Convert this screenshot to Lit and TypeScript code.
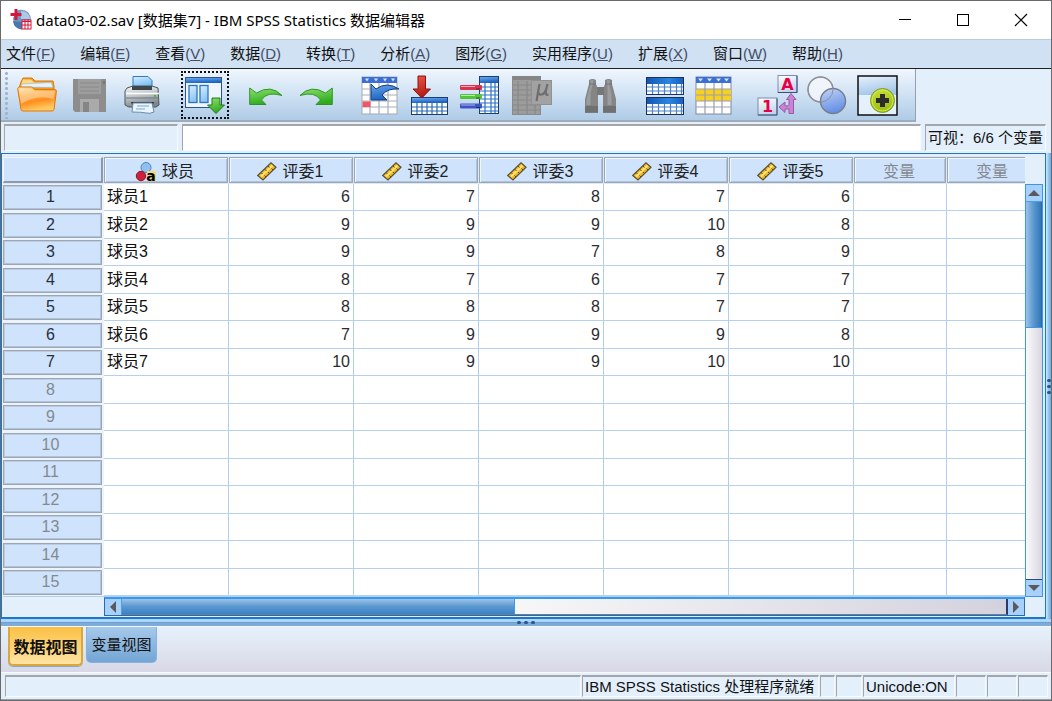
import { LitElement, html, css, svg, nothing } from "lit";
import { customElement } from "lit/decorators.js";
import { classMap } from "lit/directives/class-map.js";

type Menu = { name: string; key: string };
type Tool = { label: string; art: unknown; focused?: boolean; off?: boolean };
type ToolGroup = { kind: string; tools: Tool[] };

const MENUS: Menu[] = [
  { name: "文件", key: "F" },
  { name: "编辑", key: "E" },
  { name: "查看", key: "V" },
  { name: "数据", key: "D" },
  { name: "转换", key: "T" },
  { name: "分析", key: "A" },
  { name: "图形", key: "G" },
  { name: "实用程序", key: "U" },
  { name: "扩展", key: "X" },
  { name: "窗口", key: "W" },
  { name: "帮助", key: "H" },
];

const JUDGES = ["评委1", "评委2", "评委3", "评委4", "评委5"];
const CASES: (string | number)[][] = [
  ["球员1", 6, 7, 8, 7, 6],
  ["球员2", 9, 9, 9, 10, 8],
  ["球员3", 9, 9, 7, 8, 9],
  ["球员4", 8, 7, 6, 7, 7],
  ["球员5", 8, 8, 8, 7, 7],
  ["球员6", 7, 9, 9, 9, 8],
  ["球员7", 10, 9, 9, 10, 10],
];
const ROWS = 15;

/* Horizontal and vertical rules of a small table drawing. */
const rules = (xs: number[], ys: number[], x0: number, x1: number, y0: number, y1: number, color: string) => svg`
  <path fill="none" stroke=${color} stroke-width="1.2"
    d=${xs.map((x) => `M${x} ${y0}V${y1}`).join("") + ys.map((y) => `M${x0} ${y}H${x1}`).join("")}></path>`;

const folder = svg`
  <path d="M5 35 2 13 4 7 6 3h9l3 3h18l1 5v22z" fill="#f39a1c" stroke="#d97a0c"></path>
  <path d="M6 4.500h8l3 3h18l1 4H3.500z" fill="#ffd884"></path>
  <path d="M4 12 5 9l29-1.500 2 5z" fill="#e6f2fd" stroke="#8fb7da" stroke-width=".6"></path>
  <path d="M.7 14q0-2 2-2h12l3 2.500h20q2 0 1.700 2L37 34.500q-.3 1.500-2 1.500H6q-1.500 0-2-1.500z" fill="url(#g-folder)" stroke="#e07a0c"></path>
  <path d="M2 15q.2-1.500 1.500-1.500h11l3 2.500h20.500l-1.500 8Q20 19 4 29z" fill="#fff" opacity=".35"></path>`;

const disk = svg`
  <path d="M4 4h33v33H6l-2-2z" fill="#8d8d8d"></path>
  <path d="M9 4h23v15H9z" fill="#9e9e9e"></path>
  <path d="M11 8h19M11 12h19M11 16h19" stroke="#8a8a8a"></path>
  <path d="M11 24h19v13H11z" fill="#aaa"></path>
  <path d="M14 27h6v10h-6z" fill="#858585"></path>
  <path d="M34 6h2v3h-2z" fill="#777"></path>`;

const printer = svg`
  <path d="M12 1.500h15l4 4V16H12z" fill="url(#g-paper)" stroke="#2b7cc4"></path>
  <path d="M6 13l6-2h19l6 2 1 17-3 2H8l-4-2V16z" fill="url(#g-steel)" stroke="#4f565c"></path>
  <path d="M11 11h20v4H11z" fill="#3f464c"></path>
  <path d="M5 18.500h33" stroke="#fff" stroke-width="1.500"></path>
  <path d="M5 23h33" stroke="#6d757c"></path>
  <circle cx="34" cy="21" r="1.200" fill="#45c42e"></circle>
  <path d="M10 27h23l-1 3H11z" fill="#2f353a"></path>
  <path d="M12 28h19l2 9q-4 2-8 1t-14-1z" fill="#eaf5ff" stroke="#6d8aa4"></path>
  <path d="M16 31h12M15 34h9" stroke="#7aa7cf"></path>`;

const dialogs = svg`
  <rect x="4.500" y="2.500" width="36" height="30" fill="#eef5fd" stroke="#2a5293"></rect>
  <rect x="5" y="3" width="35" height="5" fill="url(#g-blue)"></rect>
  <rect x="8" y="10.500" width="8" height="17" fill="url(#g-window)" stroke="#2b76c2" stroke-width="1.300"></rect>
  <rect x="19" y="10.500" width="8" height="17" fill="url(#g-window)" stroke="#2b76c2" stroke-width="1.300"></rect>
  <path d="M31 23h8v7h4.500L35 38.500 26.500 30H31z" fill="url(#g-green)" stroke="#237a12"></path>`;

const undo = svg`
  <path d="M.700 13v16.500H17L12.500 25Q18 16 33 20.500 22 9 7.500 18z" fill="url(#g-green)" stroke="#25901a" stroke-width=".9"></path>`;
const redo = svg`
  <path d="M33.300 13v16.500H17l4.500-4.500Q16 16 1 20.500 12 9 26.500 18z" fill="url(#g-green)" stroke="#25901a" stroke-width=".9"></path>`;

const goCase = svg`
  <rect x="3" y="2" width="35" height="37" fill="#fff" stroke="#a4a9b5"></rect>
  <rect x="3" y="2" width="35" height="6" fill="#3c6fd4"></rect>
  <path d="M6 3.500h4l-2 3zM15 3.500h4l-2 3zM24 3.500h4l-2 3zM32 3.500h4l-2 3z" fill="#d7e4fb"></path>
  ${rules([11, 20, 29], [14, 20, 26, 32], 3, 38, 8, 39, "#a8adbb")}
  <rect x="3.500" y="26.500" width="8" height="5.500" fill="#f05467"></rect>
  <path d="M12 9v16h16l-5-5q6-7 17-6Q28 6 17 14z" fill="url(#g-blue)" stroke="#173f7c"></path>`;

const goVar = svg`
  <rect x="2.500" y="22.500" width="36" height="17" fill="#fff" stroke="#1a3f73"></rect>
  <rect x="3" y="23" width="35" height="5" fill="url(#g-blue)"></rect>
  ${rules([8, 13, 18, 23, 28, 33], [32, 36], 3, 38, 28, 39, "#2a68b3")}
  <path d="M9 1h7.500v13h5l-8.700 9L4 14h5z" fill="url(#g-red)" stroke="#8b1410"></path>`;

const variables = svg`
  <rect x="20.500" y="1.500" width="19" height="37" fill="#fff" stroke="#1a3f73"></rect>
  <rect x="21" y="2" width="18" height="6" fill="url(#g-blue)"></rect>
  ${rules([26, 32, 36], [12, 16, 20, 24, 28, 32, 36], 21, 39, 8, 38, "#2a72c3")}
  <rect x="1" y="10" width="22" height="5" rx="1" fill="#d93250"></rect>
  <rect x="1" y="19" width="22" height="5" rx="1" fill="#54c43c"></rect>
  <rect x="1" y="28.500" width="22" height="5" rx="1" fill="#3e52c9"></rect>
  <path d="M2 11.500h14M2 20.500h14M2 30h14" stroke="#fff" opacity=".6"></path>
  <path d="M17 14h4M17 23h4M17 32.500h4" stroke="#111" opacity=".6"></path>`;

const descriptives = svg`
  <rect x="3.500" y="1.500" width="28" height="38" fill="#9c9c9c" stroke="#8a8a8a"></rect>
  <rect x="4" y="1" width="28" height="4" fill="#858585"></rect>
  ${rules([9, 18, 26], [10, 15, 20, 25, 30, 35], 4, 31, 6, 39, "#888888")}
  <rect x="22.500" y="5.500" width="20" height="24" fill="#a2a2a2" stroke="#909090"></rect>
  <path d="M30.500 9 27.500 26M29.500 17q0 3 3 2.500t4.500-4.500L38.500 9M37 16q-1 5 2.500 3.500" fill="none" stroke="#6e6e6e" stroke-width="2.200"></path>`;

const binoculars = svg`
  <path d="M4 5q3.500-2 7 0v4l2 5v24H0V24L4 9zM20 5q3.500-2 7 0v4l4 15v14H18V14l2-5z" fill="#858586"></path>
  <path d="M5.500 5h3l-1 5-2 8v12h-4v-6L5.500 10zM22 5h2.500v6l2 8v11h-4V14z" fill="#9b9c9d"></path>
  <path d="M12 12h7v8h-7z" fill="#777"></path>
  <path d="M0 31h13v6.500H0zM18 31h13v6.500H18z" fill="#6f7070"></path>
  <path d="M4 9h7M20 9h7" stroke="#717272"></path>`;

const split = svg`
  ${[2, 22].map(
    (y) => svg`
    <rect x="1.500" y=${y + 0.5} width="37" height="17" fill="#fff" stroke="#1a2f63"></rect>
    <rect x="2" y=${y + 1} width="36" height="6" fill="url(#g-band)"></rect>
    ${rules([7.5, 13.5, 19.5, 25.5, 31.5, 36.5], [y + 10, y + 14], 2, 38, y + 7, y + 17, "#4a82c6")}`,
  )}`;

const select = svg`
  <rect x="1" y="2" width="35" height="37" fill="#fff" stroke="#8088a0"></rect>
  <rect x="1" y="2" width="35" height="6" fill="#3c6fd4"></rect>
  <path d="M3 3.500h5l-2.500 3zM12 3.500h5l-2.500 3zM21 3.500h5l-2.500 3zM29 3.500h5l-2.500 3z" fill="#d7e4fb"></path>
  <rect x="1" y="14" width="35" height="12" fill="#f8d024"></rect>
  ${rules([10, 19, 27], [14, 20, 26, 32], 1, 36, 8, 39, "#9a9fae")}`;

const labels = svg`
  <rect x="23" y=".5" width="19" height="17" fill="url(#g-key)" stroke="#7d8db0"></rect>
  <path d="M42 1v16.500H23" fill="none" stroke="#34507e"></path>
  <text x="32.500" y="14.500" text-anchor="middle" class="key-glyph">A</text>
  <rect x="3" y="23" width="19" height="17" fill="url(#g-key)" stroke="#7d8db0"></rect>
  <path d="M22 23.500V40H3" fill="none" stroke="#34507e"></path>
  <text x="12.500" y="37" text-anchor="middle" class="key-glyph">1</text>
  <path d="M36 18.500l-4.500 6H34v5q0 2-4 1.500v-4L24 32l6 5.500V34h4v4.500h4.500v-14H41z" fill="#c884d0" stroke="#9a58a8"></path>`;

const sets = svg`
  <circle cx="15.500" cy="14.500" r="12.500" fill="#f3f6fc" fill-opacity=".85" stroke="#8d919b" stroke-width="1.500"></circle>
  <circle cx="28" cy="26" r="12.500" fill="url(#g-set)" stroke="#777d8c" stroke-width="1.500"></circle>
  <circle cx="15.500" cy="14.500" r="12.500" fill="none" stroke="#8d919b"></circle>`;

const addOn = svg`
  <rect x="3" y="1" width="39" height="39" fill="#e4f0fc"></rect>
  <path d="M3 1h39v19H3z" fill="url(#g-pane)"></path>
  <rect x="3" y="1" width="39" height="39" fill="none" stroke="#111" stroke-width="1.500"></rect>
  <circle cx="27.500" cy="25.500" r="12" fill="url(#g-lime)" stroke="#7f9c1c"></circle>
  <circle cx="27.500" cy="25.500" r="10.500" fill="none" stroke="#d3ea55"></circle>
  <path d="M25 19h5v4h4v5h-4v4h-5v-4h-4v-5h4z" fill="#2c2c2c"></path>`;

const TOOLS: ToolGroup[] = [
  {
    kind: "loose",
    tools: [
      { label: "打开", art: folder },
      { label: "保存", art: disk, off: true },
      { label: "打印", art: printer },
    ],
  },
  { kind: "", tools: [{ label: "重新调用对话框", art: dialogs, focused: true }] },
  { kind: "", tools: [{ label: "撤消", art: undo }, { label: "重做", art: redo }] },
  {
    kind: "",
    tools: [
      { label: "转到个案", art: goCase },
      { label: "转到变量", art: goVar },
      { label: "变量", art: variables },
      { label: "描述统计", art: descriptives, off: true },
    ],
  },
  { kind: "apart", tools: [{ label: "查找", art: binoculars, off: true }] },
  { kind: "", tools: [{ label: "拆分文件", art: split }, { label: "选择个案", art: select }] },
  {
    kind: "",
    tools: [
      { label: "值标签", art: labels },
      { label: "使用变量集", art: sets },
      { label: "定制工具栏", art: addOn },
    ],
  },
];

const SHARED_FONT = css`"Liberation Sans", "Noto Sans CJK SC", sans-serif`;

@customElement("app-root")
export class AppRoot extends LitElement {
  static styles = css`
    :host {
      display: flex;
      flex-direction: column;
      box-sizing: border-box;
      min-height: 100vh;
      overflow: hidden;
      border: 1px solid #6a6a6c;
      background: #e3effb;
      color: #111;
      font: 15px/20px ${SHARED_FONT};
    }
    * {
      box-sizing: border-box;
    }
    button,
    input {
      margin: 0;
      padding: 0;
      border: 0;
      border-radius: 0;
      background: none;
      color: inherit;
      font: inherit;
    }
    svg {
      display: block;
      flex: none;
      overflow: visible;
    }
    .defs {
      position: absolute;
    }

    .title {
      display: flex;
      align-items: center;
      height: 38px;
      padding: 0 1px 0 9px;
      background: #fff;
      color: #000;
    }
    .title-text {
      flex: 1;
      margin: 0 0 0 3px;
      font: 15px/20px "Noto Sans", "Noto Sans CJK SC", sans-serif;
      white-space: nowrap;
    }
    .window-button {
      display: grid;
      place-items: center;
      width: 58px;
      height: 38px;
    }

    .menu {
      display: flex;
      gap: 25px;
      height: 30px;
      padding: 0 5px;
      border-top: 1px solid #b9cddd;
      border-bottom: 1px solid #1d2126;
      background: #cfe1f3;
      white-space: nowrap;
    }
    .mnemonic {
      color: #444d63;
    }

    .tool-row {
      display: flex;
    }
    .toolbar {
      display: flex;
      align-items: center;
      gap: 20px;
      height: 53px;
      padding-right: 20px;
      border-right: 1px solid #979fa8;
      border-bottom: 2px solid #a2acb8;
      background: linear-gradient(#eff6fd, #d3e4f5 45%, #afcbe6);
    }
    .grip {
      width: 3px;
      height: 48px;
      margin: 0 -11px 0 4px;
      background: radial-gradient(circle, #9fb2c6 1px, transparent 2px) 0 0 / 3px 5px;
    }
    .group {
      display: flex;
      align-items: center;
      gap: 10px;
    }
    .loose {
      gap: 12px;
    }
    .apart {
      margin-left: 16px;
    }
    .tool {
      display: grid;
      place-items: center start;
      width: 40px;
      height: 48px;
    }
    .focused {
      width: 48px;
      outline: 2px dotted #111;
      outline-offset: -2px;
    }
    .key-glyph {
      font: bold 16px "DejaVu Sans", sans-serif;
      fill: #e60046;
    }

    .entry {
      display: flex;
      gap: 4px;
      height: 31px;
      padding: 2px 5px 2px 3px;
    }
    .inset {
      border: 1px solid;
      border-width: 2px 1px 1px;
      border-color: #a3a6ab #f8fbfe #f8fbfe #a4a6aa;
    }
    .cell-name {
      width: 174px;
    }
    .cell-value {
      flex: 1;
      min-width: 0;
      background: #fff;
    }
    .visible {
      padding: 2px 2px 0;
      white-space: nowrap;
    }

    .work {
      display: flex;
      flex: 1;
      background: #e3effb;
    }
    .frame {
      display: grid;
      flex: 1;
      grid-template-columns: minmax(0, 1fr) 18px;
      grid-template-rows: auto 19px;
      align-content: start;
      min-width: 0;
      padding: 2px 2px 1px 1px;
      border: 1px solid #1d76c8;
      border-bottom-width: 2px;
    }
    .side-split {
      display: flex;
      flex-direction: column;
      align-items: center;
      justify-content: center;
      gap: 3px;
      width: 5px;
      background: linear-gradient(90deg, #d3e9ff, #8fc8fc 50%, #72a9dc);
    }
    .base-split {
      display: flex;
      align-items: center;
      justify-content: center;
      gap: 3px;
      height: 7px;
      background: linear-gradient(#a9d7ff 0 3px, #6d9dcc 3px 4px, #7fabd9 4px);
    }
    .dot {
      width: 4px;
      height: 3px;
      border-radius: 2px;
      background: #2b5590;
    }

    .sheet-clip {
      min-width: 0;
      overflow: hidden;
      border-bottom: 1px solid #b4d2ef;
    }
    .sheet {
      width: 100%;
      min-width: 1037px;
      border-spacing: 0;
      table-layout: fixed;
      background: #fff;
      font-size: 16px;
    }
    .col-head {
      width: 101px;
    }
    .col-data {
      width: 125px;
    }
    .col-spare {
      width: 93px;
    }
    th,
    td {
      padding: 0;
      font-weight: normal;
      white-space: nowrap;
    }
    .head-cell {
      height: 28px;
      padding: 1px 1px 1px 0;
      background: #dfe7f0;
    }
    .head-face {
      display: flex;
      align-items: center;
      justify-content: center;
      gap: 6px;
      height: 26px;
      padding: 3px 2px 0 0;
      border: 1px solid #9aa7b9;
      background: #cfe3fc;
      box-shadow: inset 1px 1px 0 #f0f7ff, inset -1px -1px 0 #b4c2d6;
      color: #222;
    }
    .spare {
      color: #85898f;
    }
    .corner {
      border-width: 1px 2px 2px 1px;
      border-color: #eef5fd #8b99ae #8b99ae #eef5fd;
      box-shadow: none;
    }
    .row-head {
      padding: 0 2px 0 0;
      background: #edf3fa;
      text-align: center;
    }
    .row-face {
      display: block;
      height: 25px;
      padding-right: 4px;
      border: 1px solid #9aa7b9;
      background: #cfe3fc;
      box-shadow: inset 1px 1px 0 #bccbe0, inset -1px -1px 0 #b4c2d6;
      line-height: 22px;
      color: #28303c;
    }
    .unused {
      color: #85898f;
    }
    .row {
      height: 27px;
    }
    .row:nth-child(even) {
      height: 28px;
    }
    .cell {
      padding: 0 3px;
      border-right: 1px solid #b0cfee;
      border-bottom: 1px solid #b4d2ef;
      line-height: 22px;
    }
    .number {
      text-align: right;
      color: #2b2b33;
    }

    .v-lane {
      display: flex;
      flex-direction: column;
      padding-top: 28px;
    }
    .v-bar {
      display: flex;
      flex: 1;
      flex-direction: column;
      border: 1px solid #3a97ea;
      background: linear-gradient(90deg, #fafafa, #d8d6e0);
    }
    .v-track {
      flex: 1;
      border-top: 1px solid #4a9fe8;
      border-bottom: 1px solid #2d4a75;
    }
    .v-thumb {
      border-right: 1px solid #2a6bac;
      border-bottom: 1px solid #369af2;
      background: linear-gradient(90deg, #9dc3e6, #5a98d0 50%, #3478b8);
    }
    .h-lane {
      display: flex;
      min-width: 0;
      padding-left: 101px;
    }
    .h-bar {
      display: flex;
      flex: 1;
      border: 1px solid #2a6bac;
      border-top: 2px solid #369af2;
      background: linear-gradient(90deg, #fafafa 40%, #d2d0dc);
    }
    .h-track {
      flex: 1;
      border-left: 1px solid #4a9fe8;
      border-right: 2px solid #2d3a65;
      border-bottom: 1px solid #6f7d90;
    }
    .h-thumb {
      height: 100%;
      border-right: 1px solid #369af2;
      background: linear-gradient(#9dc3e6, #5a98d0 50%, #3a82c4);
    }
    .arrow {
      display: grid;
      flex: none;
      place-items: center;
      width: 16px;
      height: 16px;
      background: #a8d0fc;
    }

    .views {
      display: flex;
      align-items: flex-start;
      gap: 3px;
      height: 46px;
      padding: 0 7px;
      background: linear-gradient(#e6f1fc, #d8d8e6);
      border-top: 1px solid #f2f8fe;
    }
    .view {
      width: 71px;
      height: 36px;
      border: 1px solid #86b2dc;
      border-top: 0;
      border-radius: 0 0 5px 5px;
      background: linear-gradient(#a6c9ea, #74a5d5);
      line-height: 36px;
      white-space: nowrap;
    }
    .current {
      width: 75px;
      height: 39px;
      border: 2px solid #d9a83c;
      border-top: 0;
      background: linear-gradient(#fbc044, #ffe3a4);
      box-shadow: 0 1px 0 #86a9d0;
      font-size: 16px;
      font-weight: bold;
      line-height: 42px;
    }

    .status {
      display: flex;
      gap: 1px;
      height: 28px;
      padding: 2px 3px 2px 4px;
      border-top: 1px solid #f8fbfe;
      border-bottom: 1px solid #9aa0a8;
      white-space: nowrap;
    }
    .status-cell {
      padding-left: 2px;
    }
    .fill {
      flex: 1;
    }
    .message {
      width: 237px;
    }
    .thin {
      width: 15px;
    }
    .mid {
      width: 26px;
    }
    .unicode {
      width: 92px;
    }
    .slot {
      width: 30px;
    }
  `;

  private gradient(id: string, stops: string[]) {
    return svg`<linearGradient id=${id} x1="0" y1="0" x2="0.3" y2="1">
      ${stops.map((c, i) => svg`<stop offset=${i / (stops.length - 1)} stop-color=${c}></stop>`)}
    </linearGradient>`;
  }

  private defs() {
    return html`<svg class="defs" width="0" height="0" aria-hidden="true">
      <defs>
        ${this.gradient("g-folder", ["#ffe3a6", "#ffad45", "#ff8f1e", "#ffc860"])}
        ${this.gradient("g-paper", ["#d9efff", "#5fb0f0"])}
        ${this.gradient("g-window", ["#d9efff", "#8cc4f2"])}
        ${this.gradient("g-steel", ["#f3f5f6", "#c3c9cd", "#7f878d"])}
        ${this.gradient("g-blue", ["#6aa9ef", "#1c62bf"])}
        ${this.gradient("g-green", ["#8fe072", "#2fab1e"])}
        ${this.gradient("g-red", ["#ee5a4a", "#b41a14"])}
        ${this.gradient("g-key", ["#ffffff", "#c4d4ec"])}
        ${this.gradient("g-set", ["#c3d4f6", "#6690e6"])}
        ${this.gradient("g-pane", ["#e8f2fc", "#a4c6e8"])}
        ${this.gradient("g-lime", ["#c9e23c", "#9dbd12"])}
        <linearGradient id="g-band">
          <stop offset="0" stop-color="#1556b0"></stop>
          <stop offset=".6" stop-color="#2a86e2"></stop>
          <stop offset="1" stop-color="#1660c0"></stop>
        </linearGradient>
      </defs>
    </svg>`;
  }

  private titleBar() {
    return html`<header class="title">
      <svg width="23" height="22" viewBox="0 0 23 22" aria-hidden="true">
        <path d="M8 1q12-2 13 10l-9 9Q3 18 3 9z" fill="#6d9bc6"></path>
        <path d="M11 2q8 0 9 8h-9z" fill="#a9cbe6"></path>
        <path d="M3 12q1 8 9 8.500V13z" fill="#4a76ae"></path>
        <path d="M4.500 0h3v4h4v3h-4v4h-3V7h-4V4h4z" fill="#d8153a"></path>
        <rect x="12" y="11" width="9" height="9" fill="#fff" stroke="#d8153a"></rect>
        <path d="M12 12.500h9M12 16h9M15 11v9M18 11v9" stroke="#d8153a"></path>
      </svg>
      <h1 class="title-text">data03-02.sav [数据集7] - IBM SPSS Statistics 数据编辑器</h1>
      <button class="window-button" aria-label="最小化">
        <svg width="12" height="12"><path d="M0 5.500h12" stroke="#000"></path></svg>
      </button>
      <button class="window-button" aria-label="最大化">
        <svg width="12" height="12"><rect x=".5" y=".5" width="11" height="11" fill="none" stroke="#000"></rect></svg>
      </button>
      <button class="window-button" aria-label="关闭">
        <svg width="12" height="12"><path d="M0 0 12 12M12 0 0 12" stroke="#000" stroke-width="1.200"></path></svg>
      </button>
    </header>`;
  }

  private toolbar() {
    return html`<div class="tool-row">
      <div class="toolbar" role="toolbar" aria-label="工具栏">
        <div class="grip"></div>
        ${TOOLS.map(
          (g) => html`<div class=${classMap({ group: true, loose: g.kind === "loose", apart: g.kind === "apart" })}>
            ${g.tools.map(
              (t) => html`<button
                class=${classMap({ tool: true, focused: !!t.focused })}
                aria-label=${t.label}
                ?disabled=${!!t.off}
              >
                <svg width="40" height="40" viewBox="0 0 40 40" aria-hidden="true">${t.art}</svg>
              </button>`,
            )}
          </div>`,
        )}
      </div>
    </div>`;
  }

  private ruler() {
    return html`<svg width="20" height="20" viewBox="0 0 20 20" aria-hidden="true">
      <path d="M.7 13.500 14 .7l5 4.500L6 18z" fill="#f3b91c" stroke="#55503f" stroke-width="1.200"></path>
      <path d="M4 14.500 15.500 3.500" stroke="#ffe27a" stroke-width="2"></path>
      <path d="M4 10.500l1.500 1.500M7.500 7l2 2M11 4l1.500 1.500M9 15l-1.500-1.500M12.500 11.500 11 10M16 8l-1.500-1.500" stroke="#5a5028"></path>
    </svg>`;
  }

  private nominal() {
    return html`<svg width="20" height="20" viewBox="0 0 20 20" aria-hidden="true">
      <circle cx="10" cy="5.500" r="5" fill="#8fc0ee" stroke="#4a86c4"></circle>
      <circle cx="5" cy="14" r="4.700" fill="#d01f3c" stroke="#8e1328"></circle>
      <rect x="11" y="9" width="9" height="10" fill="#f6d978"></rect>
      <text x="15" y="19" text-anchor="middle" font-family="DejaVu Sans" font-size="14" font-weight="bold">a</text>
    </svg>`;
  }

  private sheet() {
    return html`<table class="sheet">
      <colgroup>
        <col class="col-head" />
        <col class="col-data" span="6" />
        <col class="col-spare" />
        <col />
      </colgroup>
      <thead>
        <tr>
          <td class="head-cell"><div class="head-face corner"></div></td>
          <th class="head-cell" scope="col"><div class="head-face">${this.nominal()}球员</div></th>
          ${JUDGES.map(
            (j) => html`<th class="head-cell" scope="col"><div class="head-face">${this.ruler()}${j}</div></th>`,
          )}
          ${[0, 1].map(() => html`<th class="head-cell" scope="col"><div class="head-face spare">变量</div></th>`)}
        </tr>
      </thead>
      <tbody>
        ${Array.from({ length: ROWS }, (_, r) => {
          const record = CASES[r];
          return html`<tr class="row">
            <th class="row-head" scope="row">
              <span class=${classMap({ "row-face": true, unused: !record })}>${r + 1}</span>
            </th>
            ${Array.from(
              { length: 8 },
              (_, c) => html`<td class=${classMap({ cell: true, number: c > 0 })}>${record?.[c] ?? nothing}</td>`,
            )}
          </tr>`;
        })}
      </tbody>
    </table>`;
  }

  private arrow(label: string, d: string) {
    return html`<button class="arrow" aria-label=${label}>
      <svg width="12" height="12" viewBox="0 0 12 12"><path d=${d} fill="#5a5a5c"></path></svg>
    </button>`;
  }

  render() {
    const dots = [0, 1, 2].map(() => html`<span class="dot"></span>`);
    return html`
      ${this.defs()} ${this.titleBar()}
      <nav class="menu" aria-label="菜单">
        ${MENUS.map(
          (m) => html`<button>${m.name}<span class="mnemonic">(<u>${m.key}</u>)</span></button>`,
        )}
      </nav>
      ${this.toolbar()}
      <div class="entry">
        <input class="inset cell-name" aria-label="单元格" readonly />
        <input class="inset cell-value" aria-label="单元格值" />
        <div class="inset visible">可视：6/6 个变量</div>
      </div>
      <main class="work">
        <div class="frame">
          <div class="sheet-clip">${this.sheet()}</div>
          <div class="v-lane">
            <div class="v-bar">
              ${this.arrow("向上滚动", "M0 9 6 3l6 6z")}
              <div class="v-track"><div class="v-thumb" style="height:33.4%"></div></div>
              ${this.arrow("向下滚动", "M0 3h12L6 9z")}
            </div>
          </div>
          <div class="h-lane">
            <div class="h-bar">
              ${this.arrow("向左滚动", "M9 0v12L3 6z")}
              <div class="h-track"><div class="h-thumb" style="width:44.5%"></div></div>
              ${this.arrow("向右滚动", "M3 0v12l6-6z")}
            </div>
          </div>
        </div>
        <div class="side-split">${dots}</div>
      </main>
      <div class="base-split">${dots}</div>
      <div class="views">
        <button class="view current">数据视图</button>
        <button class="view">变量视图</button>
      </div>
      <footer class="status">
        <div class="inset fill"></div>
        <div class="inset status-cell message">IBM SPSS Statistics 处理程序就绪</div>
        <div class="inset thin"></div>
        <div class="inset mid"></div>
        <div class="inset status-cell unicode">Unicode:ON</div>
        <div class="inset slot"></div>
        <div class="inset slot"></div>
        <div class="inset slot"></div>
      </footer>
    `;
  }
}
